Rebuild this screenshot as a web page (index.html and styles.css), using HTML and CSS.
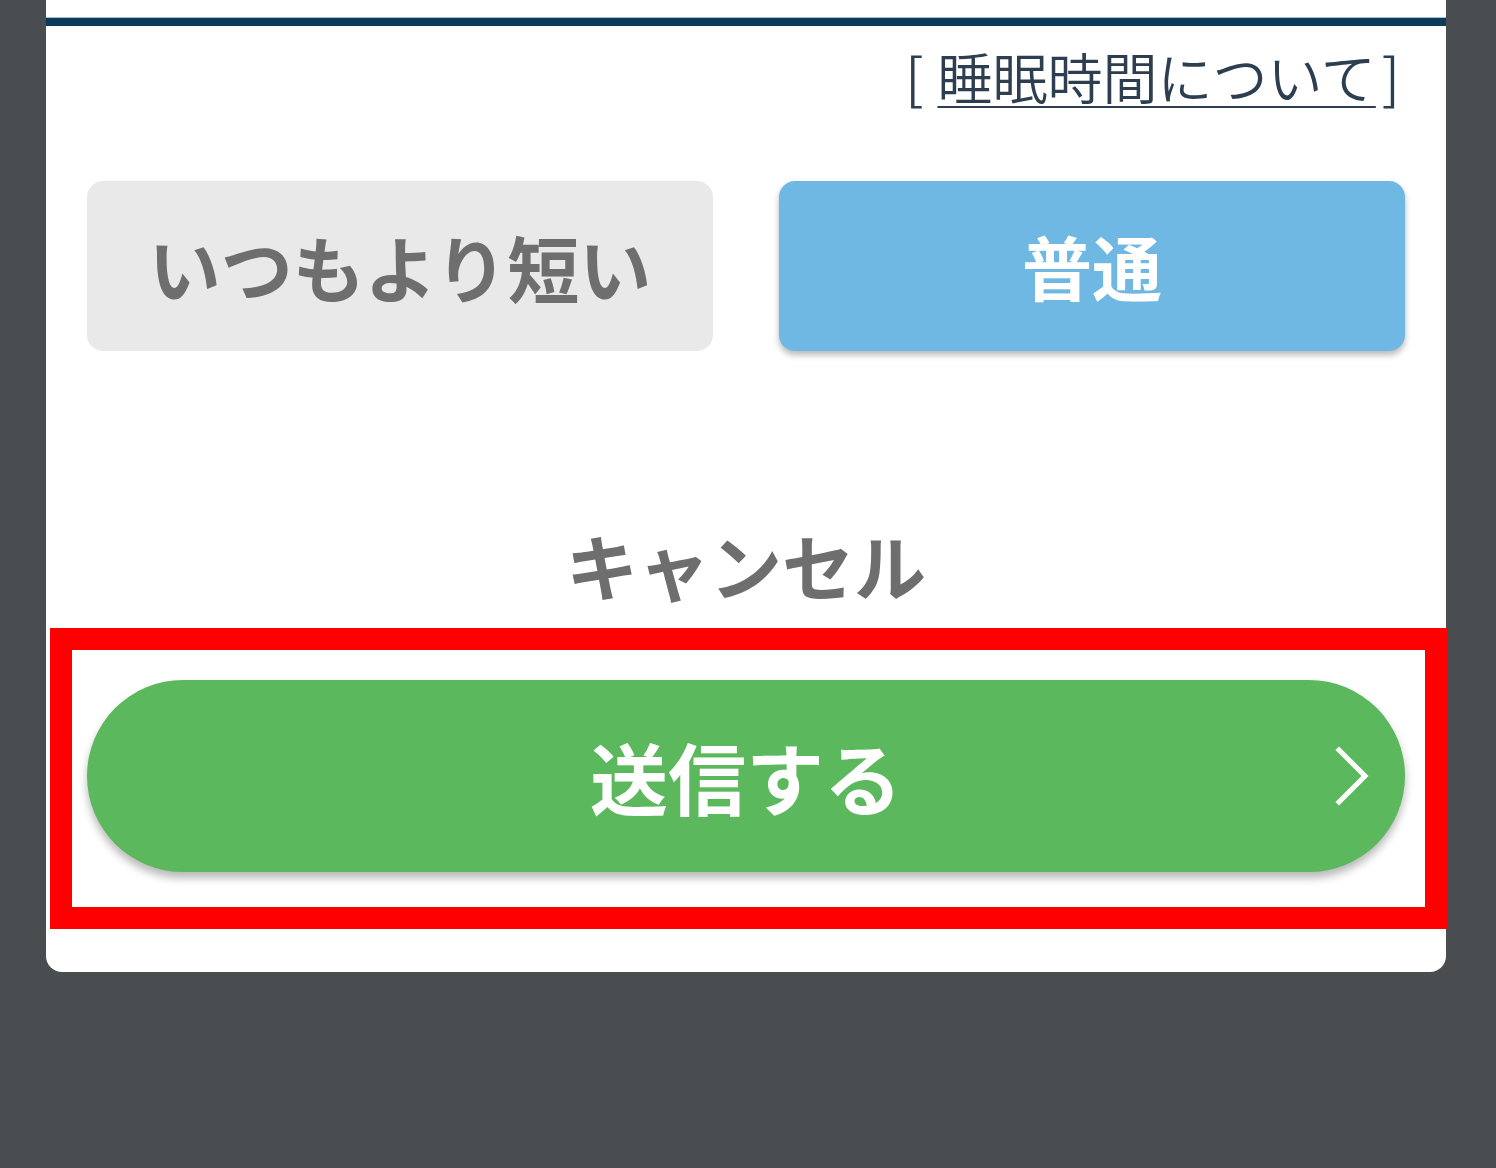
FILE: index.html
```html
<!DOCTYPE html>
<html lang="ja">
<head>
<meta charset="utf-8">
<title>睡眠時間</title>
<link rel="stylesheet" href="styles.css">
</head>
<body>
<div class="card">
  <div class="rule"></div>
  <div class="about"><span class="br br-l">[</span><a class="about-link" href="#">睡眠時間について</a><span class="br br-r">]</span></div>
  <div class="choices">
    <button class="choice choice-off" type="button">いつもより短い</button>
    <button class="choice choice-on" type="button">普通</button>
  </div>
  <div class="cancel">キャンセル</div>
  <div class="send-area">
    <button class="send" type="button">送信する
      <svg class="chev" width="40" height="60" viewBox="0 0 40 60" aria-hidden="true"><polyline points="7,4 33,30 7,56" fill="none" stroke="#fff" stroke-width="5" stroke-linecap="square"/></svg>
    </button>
    <div class="highlight"></div>
  </div>
</div>
</body>
</html>
```

FILE: styles.css
```css
html, body {
  margin: 0;
  padding: 0;
}
body {
  background: #4a4d4f;
  font-family: "Noto Sans CJK JP", "Noto Sans", sans-serif;
  height: 1168px;
  overflow: hidden;
}
.card {
  width: 1318px;
  margin: 0 46px;
  background: #fff;
  border-radius: 0 0 16px 16px;
  padding: 18px 41px 100px;
  position: relative;
}
.rule {
  height: 8px;
  margin: 0 -41px;
  background: #0b3a5b;
  box-shadow: 0 -1px 0 #9cc2d8;
}
.about {
  margin-top: 13px;
  text-align: right;
  font-size: 55px;
  line-height: 72px;
  font-weight: 350;
  color: #2c3e50;
  padding-right: 5px;
}
.br-l {
  margin-right: 14px;
}
.br-r {
  margin-left: 6px;
}
.about-link {
  color: #2c3e50;
  text-decoration: underline;
  text-decoration-thickness: 2px;
  text-underline-offset: 7px;
}
.choices {
  margin-top: 70px;
  display: grid;
  grid-template-columns: 1fr 1fr;
  gap: 66px;
}
.choice {
  height: 170px;
  border: none;
  border-radius: 16px;
  font-family: "Noto Sans CJK JP", "Noto Sans", sans-serif;
  font-size: 72px;
  font-weight: 700;
  padding: 0;
  line-height: 1;
}
.choice-off {
  background: #e9e9e9;
  color: #6e6e6e;
}
.choice-on {
  background: #6fb8e3;
  color: #fff;
  font-size: 70px;
  box-shadow: 0 4px 6px rgba(0, 0, 0, 0.28);
}
.cancel {
  margin-top: 164px;
  text-align: center;
  font-size: 72px;
  line-height: 98px;
  font-weight: 700;
  color: #6e6e6e;
}
.send-area {
  position: relative;
  margin-top: 67px;
}
.send {
  position: relative;
  display: block;
  width: 100%;
  height: 192px;
  border: none;
  border-radius: 96px;
  background: #5cb85c;
  color: #fff;
  font-family: "Noto Sans CJK JP", "Noto Sans", sans-serif;
  font-size: 78px;
  font-weight: 700;
  line-height: 1;
  padding: 0;
  box-shadow: 0 6px 8px rgba(0, 0, 0, 0.28);
}
.chev {
  position: absolute;
  right: 33px;
  top: 66px;
}
.highlight {
  position: absolute;
  left: -37px;
  right: -42px;
  top: -52px;
  bottom: -57px;
  border: 22px solid #ff0000;
  pointer-events: none;
}
```
